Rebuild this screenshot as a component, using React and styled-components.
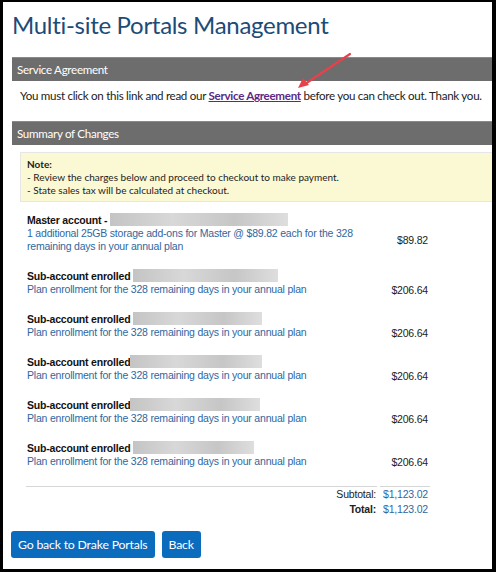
import React from 'react'
import styled, { createGlobalStyle } from 'styled-components'

const GlobalStyle = createGlobalStyle`
  html, body {
    margin: 0;
    padding: 0;
    background: #000;
  }
  body {
    font-family: "Liberation Sans", Arial, sans-serif;
  }
`

const items = [
  {
    label: 'Master account - ',
    blur: 178,
    desc: '1 additional 25GB storage add-ons for Master @ $89.82 each for the 328 remaining days in your annual plan',
    price: '$89.82',
  },
  { label: 'Sub-account enrolled ', blur: 145, desc: 'Plan enrollment for the 328 remaining days in your annual plan', price: '$206.64' },
  { label: 'Sub-account enrolled ', blur: 129, desc: 'Plan enrollment for the 328 remaining days in your annual plan', price: '$206.64' },
  { label: 'Sub-account enrolled', blur: 132, desc: 'Plan enrollment for the 328 remaining days in your annual plan', price: '$206.64' },
  { label: 'Sub-account enrolled', blur: 130, desc: 'Plan enrollment for the 328 remaining days in your annual plan', price: '$206.64' },
  { label: 'Sub-account enrolled ', blur: 121, desc: 'Plan enrollment for the 328 remaining days in your annual plan', price: '$206.64' },
]

function App() {
  return (
    <>
      <GlobalStyle />
      <Page>
        <Title>Multi-site Portals Management</Title>

        <Bar>Service Agreement</Bar>
        <Agreement>
          You must click on this link and read our <AgreementLink href="#">Service Agreement</AgreementLink> before you can check out. Thank you.
        </Agreement>

        <Bar>Summary of Changes</Bar>
        <Summary>
          <Note>
            <strong>Note:</strong>
            <div>- Review the charges below and proceed to checkout to make payment.</div>
            <div>- State sales tax will be calculated at checkout.</div>
          </Note>

          <Items>
            {items.map((item, i) => (
              <Item key={i}>
                <Label>
                  {item.label}
                  <Blur style={{ width: item.blur }} />
                </Label>
                <DescRow>
                  <Desc>{item.desc}</Desc>
                  <Price>{item.price}</Price>
                </DescRow>
              </Item>
            ))}
          </Items>

          <Totals>
            <TotalRow>
              <TotalLabel>Subtotal:</TotalLabel>
              <TotalValue>$1,123.02</TotalValue>
            </TotalRow>
            <TotalRow>
              <TotalLabel bold>Total:</TotalLabel>
              <TotalValue>$1,123.02</TotalValue>
            </TotalRow>
          </Totals>
        </Summary>

        <Buttons>
          <Button>Go back to Drake Portals</Button>
          <Button>Back</Button>
        </Buttons>

        <Arrow width="60" height="42" viewBox="0 0 60 42">
          <line x1="57" y1="3" x2="12" y2="33" stroke="#e8414b" strokeWidth="2.2" strokeLinecap="round" />
          <path d="M5 37 L10 27 L16 34 Z" fill="#e8414b" />
        </Arrow>
      </Page>
    </>
  )
}

export default App

const Page = styled.div`
  position: relative;
  margin: 2px 4px 3px 3px;
  height: 567px;
  box-sizing: border-box;
  background: #fff;
  padding: 0 0 0 9px;
  overflow: hidden;
`

const Title = styled.h1`
  margin: 0;
  padding-top: 6px;
  font-family: Lato, "Liberation Sans", sans-serif;
  font-weight: 400;
  font-size: 24px;
  letter-spacing: -0.3px;
  line-height: 34px;
  color: #1d4b77;
  height: 49px;
`

const Bar = styled.div`
  height: 24px;
  box-sizing: border-box;
  background: #6d6d6d;
  border-top: 1px solid #8a8a8a;
  color: #fff;
  font-family: Lato, "Liberation Sans", sans-serif;
  font-size: 11.6px;
  letter-spacing: -0.3px;
  line-height: 23px;
  padding-left: 5px;
`

const Agreement = styled.p`
  margin: 0;
  padding: 7px 0 0 8px;
  height: 40px;
  box-sizing: border-box;
  font-family: Lato, "Liberation Sans", sans-serif;
  font-size: 11.6px;
  letter-spacing: -0.3px;
  line-height: 16px;
  color: #222;
  white-space: nowrap;
`

const AgreementLink = styled.a`
  color: #5b2a86;
  font-weight: 700;
  text-decoration: underline;
`

const Summary = styled.div`
  padding: 7px 0 0 8px;
`

const Note = styled.div`
  background: #fbf9d4;
  border-top: 1px solid #e6e6e6;
  border-left: 1px solid #e6e6e6;
  border-bottom: 1px solid #ece9c8;
  padding: 5px 6px 4px 6px;
  font-family: Lato, "Open Sans", sans-serif;
  font-size: 10px;
  line-height: 13px;
  color: #222;
  strong {
    font-weight: 700;
  }
`

const Items = styled.div`
  width: 404px;
  margin: 10px 0 0 6px;
  display: flex;
  flex-direction: column;
  gap: 15px;
`

const Item = styled.div`
  display: flex;
  flex-direction: column;
`

const Label = styled.div`
  display: flex;
  align-items: center;
  height: 15px;
  padding-left: 1px;
  font-size: 10.5px;
  letter-spacing: -0.2px;
  font-weight: 700;
  color: #111;
  white-space: pre;
`

const Blur = styled.span`
  display: inline-block;
  height: 13px;
  background: linear-gradient(90deg, #c4c4c4 0%, #d8d8d8 35%, #c6c6c6 70%, #dedede 100%);
`

const DescRow = styled.div`
  display: flex;
  align-items: center;
  justify-content: space-between;
`

const Desc = styled.div`
  width: 330px;
  padding-left: 1px;
  font-size: 10.5px;
  letter-spacing: -0.2px;
  line-height: 13px;
  color: #2f67a0;
`

const Price = styled.div`
  font-size: 10.5px;
  letter-spacing: -0.2px;
  color: #222;
  padding-right: 2px;
`

const Totals = styled.div`
  width: 404px;
  margin: 18px 0 0 6px;
  display: flex;
  flex-direction: column;
  font-size: 10.5px;
  letter-spacing: -0.2px;
`

const TotalRow = styled.div`
  display: flex;
  justify-content: flex-end;
  height: 15px;
  align-items: center;
  &:first-child > * {
    border-top: 1px solid #d6d6d6;
  }
`

const TotalLabel = styled.div`
  flex: 1;
  text-align: right;
  padding-right: 1px;
  margin-right: 3px;
  font-weight: ${p => (p.bold ? 700 : 400)};
  color: #222;
  line-height: 14px;
`

const TotalValue = styled.div`
  width: 48px;
  color: #2f67a0;
  line-height: 14px;
  text-align: right;
  padding-right: 2px;
`

const Buttons = styled.div`
  display: flex;
  gap: 7px;
  margin: 15px 0 0 -1px;
`

const Button = styled.button`
  height: 27px;
  border: none;
  border-radius: 3px;
  background: #0b6bbd;
  color: #fff;
  font-family: Lato, "Liberation Sans", sans-serif;
  font-size: 12.3px;
  letter-spacing: -0.2px;
  padding: 0 7px;
  cursor: pointer;
`

const Arrow = styled.svg`
  position: absolute;
  left: 290px;
  top: 49px;
`
